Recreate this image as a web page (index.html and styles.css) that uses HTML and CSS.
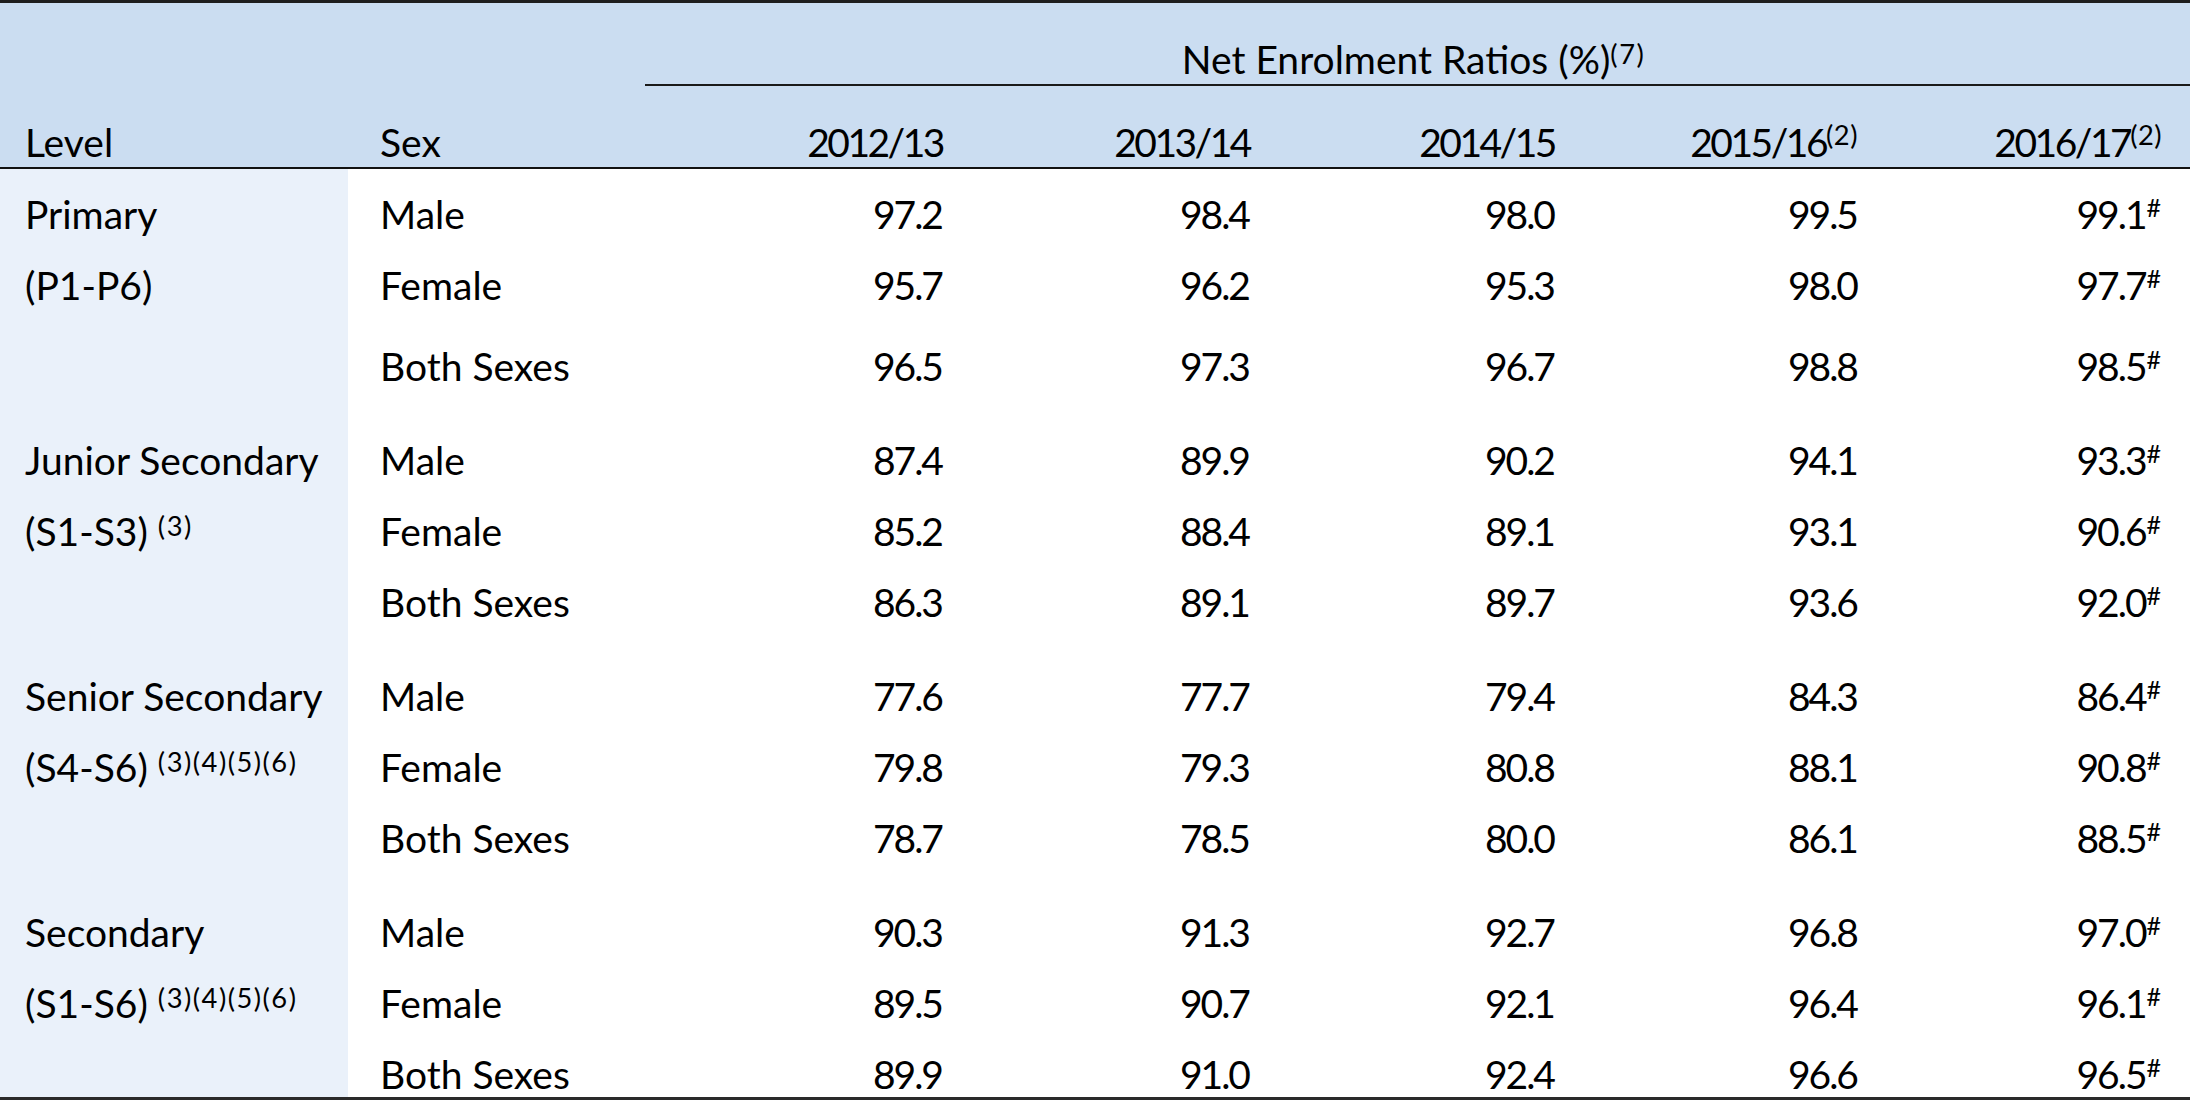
FILE: index.html
```html
<!DOCTYPE html>
<html lang="en">
<head>
<meta charset="utf-8">
<title>Net Enrolment Ratios</title>
<link rel="stylesheet" href="styles.css">
</head>
<body>
<table class="ner">
  <colgroup>
    <col class="c-level">
    <col class="c-sex">
    <col class="c-y1">
    <col class="c-y2">
    <col class="c-y3">
    <col class="c-y4">
    <col class="c-y5">
  </colgroup>
  <thead>
    <tr class="h1">
      <th class="lv"></th>
      <th class="sx"></th>
      <th class="net" colspan="5">Net Enrolment Ratios (%)<sup>(7)</sup></th>
    </tr>
    <tr class="h2">
      <th class="lv">Level</th>
      <th class="sx">Sex</th>
      <th class="yr">2012/13</th>
      <th class="yr">2013/14</th>
      <th class="yr">2014/15</th>
      <th class="yr">2015/16<sup>(2)</sup></th>
      <th class="yr">2016/17<sup>(2)</sup></th>
    </tr>
  </thead>
  <tbody>
    <tr class="first">
      <td class="lv">Primary</td><td class="sx">Male</td>
      <td class="num">97.2</td><td class="num">98.4</td><td class="num">98.0</td><td class="num">99.5</td><td class="num">99.1<sup class="hash">#</sup></td>
    </tr>
    <tr>
      <td class="lv">(P1-P6)</td><td class="sx">Female</td>
      <td class="num">95.7</td><td class="num">96.2</td><td class="num">95.3</td><td class="num">98.0</td><td class="num">97.7<sup class="hash">#</sup></td>
    </tr>
    <tr class="extra">
      <td class="lv"></td><td class="sx">Both Sexes</td>
      <td class="num">96.5</td><td class="num">97.3</td><td class="num">96.7</td><td class="num">98.8</td><td class="num">98.5<sup class="hash">#</sup></td>
    </tr>

    <tr class="group">
      <td class="lv">Junior Secondary</td><td class="sx">Male</td>
      <td class="num">87.4</td><td class="num">89.9</td><td class="num">90.2</td><td class="num">94.1</td><td class="num">93.3<sup class="hash">#</sup></td>
    </tr>
    <tr>
      <td class="lv">(S1-S3) <sup>(3)</sup></td><td class="sx">Female</td>
      <td class="num">85.2</td><td class="num">88.4</td><td class="num">89.1</td><td class="num">93.1</td><td class="num">90.6<sup class="hash">#</sup></td>
    </tr>
    <tr>
      <td class="lv"></td><td class="sx">Both Sexes</td>
      <td class="num">86.3</td><td class="num">89.1</td><td class="num">89.7</td><td class="num">93.6</td><td class="num">92.0<sup class="hash">#</sup></td>
    </tr>

    <tr class="group">
      <td class="lv">Senior Secondary</td><td class="sx">Male</td>
      <td class="num">77.6</td><td class="num">77.7</td><td class="num">79.4</td><td class="num">84.3</td><td class="num">86.4<sup class="hash">#</sup></td>
    </tr>
    <tr>
      <td class="lv">(S4-S6) <sup>(3)(4)(5)(6)</sup></td><td class="sx">Female</td>
      <td class="num">79.8</td><td class="num">79.3</td><td class="num">80.8</td><td class="num">88.1</td><td class="num">90.8<sup class="hash">#</sup></td>
    </tr>
    <tr>
      <td class="lv"></td><td class="sx">Both Sexes</td>
      <td class="num">78.7</td><td class="num">78.5</td><td class="num">80.0</td><td class="num">86.1</td><td class="num">88.5<sup class="hash">#</sup></td>
    </tr>

    <tr class="group">
      <td class="lv">Secondary</td><td class="sx">Male</td>
      <td class="num">90.3</td><td class="num">91.3</td><td class="num">92.7</td><td class="num">96.8</td><td class="num">97.0<sup class="hash">#</sup></td>
    </tr>
    <tr>
      <td class="lv">(S1-S6) <sup>(3)(4)(5)(6)</sup></td><td class="sx">Female</td>
      <td class="num">89.5</td><td class="num">90.7</td><td class="num">92.1</td><td class="num">96.4</td><td class="num">96.1<sup class="hash">#</sup></td>
    </tr>
    <tr class="last">
      <td class="lv"></td><td class="sx">Both Sexes</td>
      <td class="num">89.9</td><td class="num">91.0</td><td class="num">92.4</td><td class="num">96.6</td><td class="num">96.5<sup class="hash">#</sup></td>
    </tr>
  </tbody>
</table>
</body>
</html>
```

FILE: styles.css
```css
html, body {
  margin: 0;
  padding: 0;
  background: #ffffff;
}

body {
  font-family: "Lato", "Open Sans", sans-serif;
  font-size: 39px;
  color: #000000;
}

.ner {
  width: 2190px;
  border-collapse: collapse;
  table-layout: fixed;
  border-top: 3px solid #1e1e1e;
  border-bottom: 3px solid #2a2a2a;
}

.c-level { width: 348px; }
.c-sex { width: 297px; }
.c-y1 { width: 326px; }
.c-y2 { width: 307px; }
.c-y3 { width: 305px; }
.c-y4 { width: 303px; }
.c-y5 { width: 304px; }

.ner th,
.ner td {
  padding: 0;
  font-weight: normal;
  white-space: nowrap;
}

.ner thead th {
  background: #cbddf1;
  line-height: 47px;
  vertical-align: bottom;
  text-align: left;
}

.h1 th {
  height: 80px;
  padding-bottom: 1px;
}

.h1 .net {
  text-align: center;
  padding-right: 8px;
  border-bottom: 2px solid #1a1a1a;
}

.h2 th {
  height: 80px;
  padding-bottom: 1px;
  border-bottom: 2px solid #111111;
}

.ner .lv {
  padding-left: 25px;
  text-align: left;
}

.ner .sx {
  padding-left: 32px;
  text-align: left;
}

.ner .yr {
  text-align: right;
  padding-right: 28px;
  letter-spacing: -2.5px;
}

.ner .num {
  text-align: right;
  padding-right: 29px;
  letter-spacing: -2px;
}

.ner tbody td {
  line-height: 71px;
  vertical-align: top;
}

.ner tbody td.lv {
  background: #eaf1fa;
}

.ner tbody tr.first td { padding-top: 10px; }
.ner tbody tr.extra td { padding-top: 10px; }
.ner tbody tr.group td { padding-top: 23px; }

.ner tbody tr.last td {
  line-height: 46px;
  padding-top: 12px;
}

sup {
  font-size: 0.7em;
  line-height: 0;
  letter-spacing: 1.5px;
  vertical-align: 10px;
}

.yr sup {
  letter-spacing: 0.5px;
  vertical-align: 12px;
}

sup.hash {
  font-size: 0.64em;
  letter-spacing: 0;
  vertical-align: 12px;
  padding-left: 1px;
}
```
